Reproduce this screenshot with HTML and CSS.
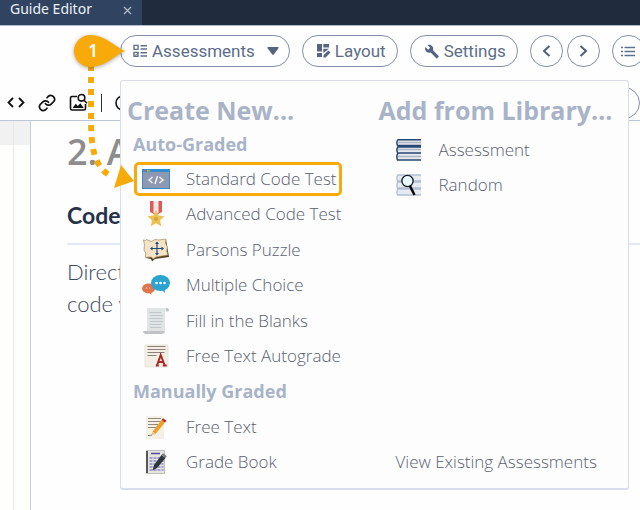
FILE: index.html
```html
<!DOCTYPE html>
<html lang="en">
<head>
<meta charset="utf-8">
<title>Guide Editor</title>
<link rel="stylesheet" href="styles.css">
</head>
<body>
<header class="tabs">
  <div class="tab"><span>Guide Editor</span>
    <button class="tab-close" aria-label="Close"><svg width="9" height="9" viewBox="0 0 9 9"><path d="M1 1l7 7M8 1l-7 7" stroke="#b3bccb" stroke-width="1.2"/></svg></button>
  </div>
</header>

<div class="toolbar">
  <button class="pill pill-menu">
    <svg width="15" height="14" viewBox="0 0 15 14" fill="none" stroke="#5f708c" stroke-width="1.4"><path d="M1 1.4h4v4H1zM1 8.4h4v4H1zM7.500 1.800H14M7.500 5H14M7.500 8.800H14M7.500 12H14"/><path d="M1.700 10.300l1.300 1.300 2.300-3" stroke-width="1"/></svg>
    <span>Assessments</span>
    <svg class="caret" width="12" height="8" viewBox="0 0 12 8"><path d="M1 0h10q1 0 .6.9L7 7.200q-1 1.200-2 0L.4.900Q0 0 1 0z" fill="#536583"/></svg>
  </button>
  <button class="pill">
    <svg width="15" height="14" viewBox="0 0 15 14" fill="#536583"><path d="M1 0h5v7.500H1zM7.300 0H13v3.500H7.300zM1 9h5v4H1zM7.300 4.800H13L7.300 9z"/><path d="M7.500 13.500v-2.200l4.800-4.800 2.100 2.100-4.800 4.900z"/></svg>
    <span>Layout</span>
  </button>
  <button class="pill">
    <svg width="16" height="15" viewBox="0 0 24 24" fill="#536583"><path d="M22.700 19l-9.100-9.100c.9-2.300.4-5-1.500-6.900-2-2-5-2.400-7.400-1.300L9 6 6 9 1.600 4.700C.4 7.100.9 10.100 2.900 12.100c1.900 1.900 4.600 2.400 6.900 1.500l9.100 9.100c.4.400 1 .4 1.400 0l2.300-2.300c.5-.4.5-1.100.1-1.400z"/></svg>
    <span>Settings</span>
  </button>
  <div class="pager">
    <button class="round" aria-label="Previous"><svg width="9" height="12" viewBox="0 0 9 12"><path d="M7.500 1L2 6l5.500 5" fill="none" stroke="#4d5f7d" stroke-width="2"/></svg></button>
    <button class="round" aria-label="Next"><svg width="9" height="12" viewBox="0 0 9 12"><path d="M1.500 1L7 6l-5.500 5" fill="none" stroke="#4d5f7d" stroke-width="2"/></svg></button>
  </div>
  <button class="round" aria-label="Contents"><svg width="14" height="11" viewBox="0 0 14 11"><path d="M0 1.500h2M0 5.500h2M0 9.500h2M3.500 1.500H14M3.500 5.500H14M3.500 9.500H14" stroke="#5f708c" stroke-width="1.400"/></svg></button>
</div>

<div class="format">
  <button class="tool" aria-label="Code"><svg width="18" height="11" viewBox="0 0 18 11" fill="none" stroke="#111" stroke-width="1.800"><path d="M6 1L1.500 5.500 6 10M12 1l4.500 4.500L12 10"/></svg></button>
  <button class="tool" aria-label="Link"><svg width="18" height="18" viewBox="0 0 24 24" fill="none" stroke="#111" stroke-width="2.300" stroke-linecap="round"><path d="M10 13a5 5 0 0 0 7.500.5l3.500-3.500a5 5 0 0 0-7-7l-2 2"/><path d="M14 11a5 5 0 0 0-7.500-.5L3 14a5 5 0 0 0 7 7l2-2"/></svg></button>
  <button class="tool" aria-label="Find image"><svg width="19" height="19" viewBox="0 0 19 19" fill="none" stroke="#111" stroke-width="1.600"><path d="M8 3.500H3q-1.500 0-1.500 1.500v10.500Q1.500 17 3 17h12q1.500 0 1.500-1.500V11"/><circle cx="12.500" cy="4.800" r="3.300"/><path d="M15 7.200l3 3"/><path d="M3.500 15l3.300-4.300 2 2.200 2.500-2.600 3.500 4.700z" fill="#111" stroke="none"/></svg></button>
  <span class="divider"></span>
  <button class="tool tool-circle" aria-label="Insert"><svg width="16" height="16" viewBox="0 0 16 16"><circle cx="8" cy="8" r="7" fill="none" stroke="#111" stroke-width="1.600"/></svg></button>
  <button class="round format-more" aria-label="More"><svg width="12" height="8" viewBox="0 0 12 8"><path d="M1 1h10L6 7z" fill="#536583"/></svg></button>
</div>

<main class="editor">
  <div class="gutter"></div>
  <div class="fold"></div>
  <article class="page">
    <h1>2. A</h1>
    <h2>Code</h2>
    <p>Direct<br>code v</p>
  </article>
</main>

<nav class="menu">
  <section class="column">
    <h2>Create New...</h2>
    <div class="rows">
      <h3>Auto-Graded</h3>
      <button class="item selected">
        <svg width="28" height="20" viewBox="0 0 28 20"><path fill="#338dcc" d="M0 0h28v20H0z"/><path fill="#8f98b3" d="M1 3h26v16H1z"/><path fill="#e65a45" d="M3 1h1.500v1.500H3z"/><path fill="#e8b83d" d="M5 1h1.500v1.500H5z"/><path fill="#50c875" d="M7 1h1.500v1.500H7z"/><path d="M10.500 8L7 11l3.500 3M17.500 8l3.500 3-3.500 3M15.500 7L13 15" fill="none" stroke="#fff" stroke-width="1.300"/></svg>
        <span>Standard Code Test</span></button>
      <button class="item">
        <svg width="28" height="26" viewBox="0 0 28 26"><path fill="#df5a55" d="M8 0h12v11l-6 3-6-3z"/><path fill="#eee9e7" d="M11.500 0h5v12h-5z"/><path fill="#ecc253" d="M14 9l2.600 5.500 5.800.7-4.300 4 1.100 6-5.200-3-5.200 3 1.100-6-4.300-4 5.800-.7z"/><circle cx="14" cy="18" r="2" fill="#d4a53d"/></svg>
        <span>Advanced Code Test</span></button>
      <button class="item">
        <svg width="28" height="24" viewBox="0 0 28 24"><path fill="#51401f" d="M3 3l7 1 2-2 4 1 8-1.500L27 19l-14 2-3 2.500L9 21l-5-1z"/><path fill="#f4e3c6" stroke="#a68b60" stroke-width=".7" d="M1.500 2l2 .5 1-1 5 2L13 1.500l4 .5 7-1-.5 4 1.800 4-.5 4 1 4-12 2-2.500 2-2-2-6 .5.500-4L2 12l.5-5z"/><path d="M9 10.500h12M15 4.500v12" stroke="#24477d" stroke-width="1.200"/><path fill="#24477d" d="M15 3.500l-2 2.500h4zM15 17.500l-2-2.500h4zM8 10.500l2.500-2v4zM22 10.500l-2.500-2v4z"/></svg>
        <span>Parsons Puzzle</span></button>
      <button class="item">
        <svg width="28" height="20" viewBox="0 0 28 20"><ellipse cx="6.500" cy="13.500" rx="6.500" ry="5" fill="#df744d"/><path fill="#df744d" d="M6 17l3.500 3-.5-4z"/><ellipse cx="18.500" cy="8" rx="9.500" ry="8" fill="#2ba3d1"/><path fill="#2ba3d1" d="M19 14l4 4-.5-6z"/><g fill="#fff"><circle cx="14.500" cy="8" r="1.300"/><circle cx="18.500" cy="8" r="1.300"/><circle cx="22.500" cy="8" r="1.300"/></g><g fill="#f6c2aa"><circle cx="4.500" cy="13" r=".8"/><circle cx="7.500" cy="13" r=".8"/></g></svg>
        <span>Multiple Choice</span></button>
      <button class="item">
        <svg width="28" height="27" viewBox="0 0 28 27"><path fill="#e1e4e5" d="M5 1h21q-3 1-3 4v20H5z"/><path fill="#bfc3c7" d="M24 1q3-.5 3 2t-3 1zM1 24h21l1 2q-2 1-5 1H3q-2-1-2-3z"/><path d="M7.500 5.500h12M8 8.500h13M7.500 11.500h13M8 14.500h13M7.500 17.500h12M8 20.500h11" stroke="#c1c6ca" stroke-width="1.200"/></svg>
        <span>Fill in the Blanks</span></button>
      <button class="item">
        <svg width="28" height="24" viewBox="0 0 28 24"><path fill="#f3efe4" stroke="#e1dbce" stroke-width=".6" d="M3 1h23v22H3z"/><path d="M5.500 2.500h18M5.500 5.500h18M5.500 8.500h17M5.500 11.500h9" stroke="#8f817a" stroke-width="1.200"/><path d="M15 21.500l3.700-10.500 4 10.500M16 18h6M13.800 21.500h3M20.800 21.500h4" fill="none" stroke="#aa2929" stroke-width="2"/></svg>
        <span>Free Text Autograde</span></button>
      <h3>Manually Graded</h3>
      <button class="item">
        <svg width="28" height="24" viewBox="0 0 28 24"><path fill="#f5f0e5" d="M4 1h18v23H4z"/><path d="M6 3.500h13M6 6.500h14M6 9.500h10M6 12.500h8" stroke="#93877c" stroke-width="1"/><path fill="#efa02b" d="M19.500 5l3.500 2.500-9.500 11.500-3-2.500z"/><path fill="#bd2423" d="M19.500 5L21 3.300l3.500 2.500L23 7.500z"/><path fill="#e7c58a" d="M10.500 16.500l3 2.500-4 1.500z"/><path d="M6 20.500q3 0 4-.5" fill="none" stroke="#807568"/></svg>
        <span>Free Text</span></button>
      <button class="item">
        <svg width="28" height="24" viewBox="0 0 28 24"><path fill="#e5e4df" stroke="#aaa99f" stroke-width=".7" d="M4.500.5h18v23h-18z"/><path fill="#555853" d="M4 1h2v22H4z"/><path d="M9 3.500h9" stroke="#504ba0" stroke-width="1.500"/><path d="M7.500 8h14M7.500 11h14M7.500 14h14M7.500 17h14M7.500 20h14" stroke="#8f8ac6" stroke-width="1.400" stroke-dasharray="3 1"/><path fill="#30363a" d="M19.500 5l4 3-8.500 10-4.500 2.500 1.500-5.500z"/><path fill="#787d80" d="M19.500 5l1.500-1.700 3.800 3L23.500 8z"/></svg>
        <span>Grade Book</span></button>
    </div>
  </section>
  <section class="column library">
    <h2>Add from Library...</h2>
    <div class="library-rows">
      <button class="item">
        <svg width="26" height="22" viewBox="0 0 26 22"><path fill="#e6e9ee" d="M1 1h24v20H1z"/><path d="M2 3.500h23M2 10.500h23M2 17.500h23" stroke="#aeb6c2" stroke-width="1.500"/><path d="M25 .8H2Q0 2.500 1.500 6.500H25M25 8H2q-2 2-.5 5.500M25 14H2q-2 3-.5 7H25" fill="none" stroke="#294776" stroke-width="1.500"/></svg>
        <span>Assessment</span></button>
      <button class="item">
        <svg width="26" height="22" viewBox="0 0 26 22"><path fill="#e6ebf2" d="M1 1h24v20H1z"/><path d="M25 1H2Q0 3 1.500 7H25M25 8H2q-2 2-.5 6H25M25 15H2q-2 3-.5 6H25" fill="none" stroke="#b2bfd2" stroke-width="1.300"/><circle cx="11.500" cy="7" r="5.600" fill="#eafaff" stroke="#161a1d" stroke-width="1.300"/><path d="M14 12l4.500 9" stroke="#080808" stroke-width="2.500"/></svg>
        <span>Random</span></button>
    </div>
    <a class="existing" href="#">View Existing Assessments</a>
  </section>
</nav>

<svg class="callout" width="80" height="170" viewBox="0 0 80 170" aria-hidden="true">
  <path d="M31 34V86C31 116 33 138 53 147" fill="none" stroke="#f9aa0b" stroke-width="6" stroke-dasharray="6 6" stroke-dashoffset="11"/>
  <path d="M61 135L54 158 74 151z" fill="#f9aa0b"/>
  <path class="drop" d="M65 21C54 16 45 5 30 5a16 16 0 0 0 0 32C45 37 54 26 65 21z" fill="#f9aa0b"/>
  <text x="33" y="27" text-anchor="middle">1</text>
</svg>
</body>
</html>
```

FILE: styles.css
```css
* { box-sizing: border-box; }

body {
  margin: 0;
  min-height: 100vh;
  display: flex;
  flex-direction: column;
  position: relative;
  overflow: hidden;
  background: #fefefe;
  font-family: "Open Sans", "Noto Sans", sans-serif;
  color: #24324a;
}

button {
  padding: 0;
  border: 0;
  background: none;
  font: inherit;
  color: inherit;
}

svg { display: block; flex: none; }
h1, h2, h3, p { margin: 0; }

.tabs {
  display: flex;
  height: 26px;
  background: #202b3e;
  border-bottom: 1px solid #aebbd2;
}

.tab {
  display: flex;
  justify-content: space-between;
  width: 142px;
  padding: 0 10px;
  background: #304461;
  color: #edf1f6;
  font: 14px/18px "Noto Sans", sans-serif;
}

.tab-close { height: 20px; }

.toolbar {
  display: flex;
  gap: 12px;
  padding: 9px 0 0 120px;
}

.pill, .round {
  display: flex;
  flex: none;
  align-items: center;
  justify-content: center;
  height: 32px;
  border: 1px solid #8290aa;
  border-radius: 16px;
  background: #fff;
}

.pill {
  gap: 4px;
  padding: 0 11px 0 13px;
  color: #5c6d89;
  font: 17px/20px Roboto, sans-serif;
}

.pill-menu { padding: 0 10px 0 12px; }
.caret { margin-left: 8px; }
.round { width: 33px; }
.pager { display: flex; gap: 4px; }

.format {
  display: flex;
  align-items: center;
  gap: 13px;
  height: 54px;
  padding: 18px 0 0 7px;
  border-bottom: 1px solid #bac5d6;
}

.divider { width: 1px; height: 18px; background: #24324a; }
.format-more { margin-left: auto; }

.editor {
  display: flex;
  flex: 1;
}

.gutter, .fold {
  background: linear-gradient(#f1f1f2 24px, #fefefc 24px);
  border-right: 1px solid #e7e8ea;
}

.gutter { width: 14px; }
.fold { width: 17px; border-right: 1px solid #c3cddd; }
.page { flex: 1; padding: 8px 0 0 36px; }

.page h1 {
  color: #8d8d8d;
  font: 600 36px/46px "Open Sans", sans-serif;
}

.page h2 {
  padding: 24px 0 12px;
  border-bottom: 2px solid #e2e8f8;
  font: 700 23px/32px Lato, sans-serif;
}

.page p {
  padding-top: 11px;
  color: #3d485a;
  font: 300 22px/32px Lato, sans-serif;
}

.menu {
  position: absolute;
  top: 80px;
  left: 120px;
  right: 11px;
  display: flex;
  min-height: 410px;
  padding: 0 0 8px 6px;
  background: #fdfdfe;
  border: 1px solid #d9ddea;
  border-bottom-width: 2px;
  border-radius: 3px;
}

.column {
  display: flex;
  flex: 1;
  flex-direction: column;
}

.library { padding-left: 2px; }

.menu h2 {
  padding-top: 13px;
  color: #a9b3c8;
  font: 700 25px/32px "Open Sans", sans-serif;
  white-space: nowrap;
}

.menu h3 {
  display: flex;
  align-items: center;
  padding-left: 6px;
  color: #a9b3c8;
  font: 700 18px/24px "Open Sans", sans-serif;
}

.rows {
  display: grid;
  flex: 1;
  grid-auto-rows: 1fr;
}

.item {
  display: flex;
  align-items: center;
  gap: 16px;
  padding-left: 15px;
  color: #5a6170;
  font: 300 17px/24px "Open Sans", sans-serif;
  text-align: left;
  white-space: nowrap;
}

.selected {
  justify-self: start;
  margin: 1px 0 1px 7px;
  padding: 0 2px 0 5px;
  border: 3px solid #f9aa0b;
  border-radius: 5px;
}

.library-rows {
  display: grid;
  grid-auto-rows: 35px;
  padding-top: 6px;
}

.library-rows .item { gap: 17px; padding-left: 17px; }

.existing {
  margin: auto 0 6px 17px;
  color: #5a6170;
  font: 300 17px/24px "Open Sans", sans-serif;
  text-decoration: none;
  white-space: nowrap;
}

.callout {
  position: absolute;
  top: 30px;
  left: 60px;
}

.drop { filter: drop-shadow(0 1px 2px #0005); }

.callout text {
  fill: #fff;
  font: 600 17px "Noto Sans", sans-serif;
}
```
